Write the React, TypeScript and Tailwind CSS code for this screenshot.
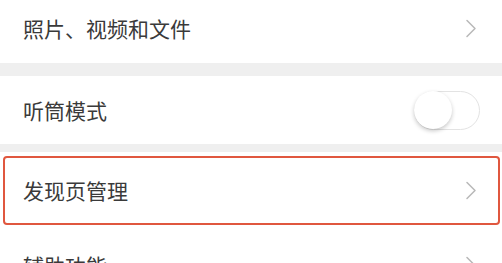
import React from 'react';

function Chevron() {
  return (
    <svg width="12" height="19" viewBox="0 0 12 19" fill="none" className="shrink-0">
      <path d="M2 1.5 L10 9.5 L2 17.5" stroke="#b8b8b8" strokeWidth="1.5" strokeLinecap="round" strokeLinejoin="round" />
    </svg>
  );
}

function Toggle() {
  return (
    <div className="relative w-[66px] h-[39px] rounded-full border-[1.5px] border-[#e3e3e3] bg-white shrink-0">
      <div className="absolute left-0 top-0 w-[38px] h-[38px] -ml-[1px] -mt-[1px] rounded-full bg-white shadow-[0_2px_4px_rgba(0,0,0,0.22)]" />
    </div>
  );
}

function Row({ label, className, children }: { label: string; className: string; children: React.ReactNode }) {
  return (
    <div className={`flex items-center justify-between bg-white pl-[23px] ${className}`}>
      <span className="text-[21px] leading-none text-[#3a3a3a]">{label}</span>
      {children}
    </div>
  );
}

export default function App() {
  return (
    <div
      className="w-[502px] h-[263px] overflow-hidden bg-white"
      style={{ fontFamily: '"Noto Sans CJK SC", "Noto Sans", sans-serif' }}
    >
      <Row label="照片、视频和文件" className="h-[63px] pb-[7px] pr-[25px]">
        <Chevron />
      </Row>
      <div className="h-[13px] bg-[#efefef]" />
      <Row label="听筒模式" className="h-[68px] pr-[22px]">
        <Toggle />
      </Row>
      <div className="h-[8px] bg-[#efefef]" />
      <div className="relative">
        <Row label="发现页管理" className="h-[77px] pr-[25px]">
          <Chevron />
        </Row>
        <div className="absolute left-[3px] right-[2px] top-[4px] bottom-[4px] rounded-[4px] border-2 border-[#e0573f] pointer-events-none" />
      </div>
      <Row label="辅助功能" className="h-[68px] pt-[5px] pr-[25px]">
        <Chevron />
      </Row>
    </div>
  );
}
